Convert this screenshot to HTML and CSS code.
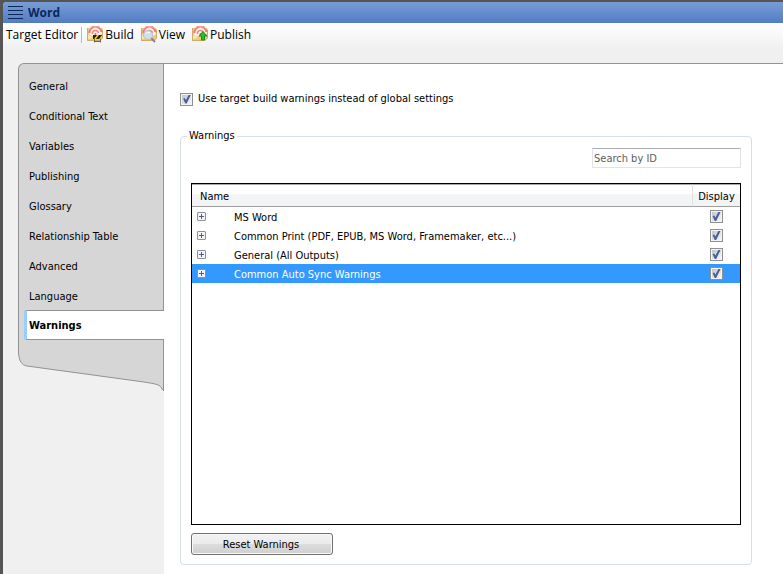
FILE: index.html
```html
<!DOCTYPE html>
<html lang="en">
<head>
<meta charset="utf-8">
<title>Word - Target Editor</title>
<link rel="stylesheet" href="styles.css">
</head>
<body>
<svg class="defs" aria-hidden="true">
  <symbol id="target" viewBox="0 0 16 16">
    <path d="M0 2H15L16 4V12L13 15H0Z" fill="#edca84"/>
    <path d="M.5 2V14.500H13L15.500 12V4" fill="none" stroke="#d4ab62"/>
    <path d="M2 9A6 6 0 0 1 15 8L12 10H4Z" fill="#fff1ec"/>
    <path d="M2.500 7A6 6 0 0 1 14.500 6" fill="none" stroke="#ee7777" stroke-width="2"/>
    <path d="M2 4Q8 -3 14 3" fill="none" stroke="#f5a3a0"/>
    <path d="M5.500 8A3 3 0 0 1 11.500 7" fill="none" stroke="#ee8885" stroke-width="1.500"/>
    <circle cx="8.500" cy="8" r="1" fill="#e36464"/>
    <path d="M1 9L6 11L3 13H1Z" fill="#fae5ad"/>
  </symbol>
</svg>
<div class="window">
  <header class="titlebar">
    <svg class="grip" viewBox="0 0 15 13" aria-hidden="true"><path d="M0 .5H15M0 4.5H15M0 8.5H15M0 12.5H15" stroke="#0b2859"/></svg>
    <h1>Word</h1>
  </header>
  <div class="toolbar">
    <span class="caption">Target Editor</span>
    <button type="button" class="tool">
      <svg viewBox="0 0 16 17" aria-hidden="true"><use href="#target" width="16" height="16"/><path d="M6 9H15V13H6Z" fill="#292514"/><path d="M7 13L10 9H12L9 13ZM12 13L15 9V13Z" fill="#f4c626"/><path d="M7.500 13V16.500M13.500 13V16.500M7 15.500H14" stroke="#666"/></svg>
      Build</button>
    <button type="button" class="tool">
      <svg viewBox="0 0 16 17" aria-hidden="true"><use href="#target" width="16" height="16"/><path d="M10 12L14 16" stroke="#868686" stroke-width="2"/><circle cx="7" cy="9" r="4.500" fill="#d0dfeb" stroke="#b6bec6"/><path d="M4.500 8Q6 5.500 9 6.500" fill="none" stroke="#fff"/></svg>
      View</button>
    <button type="button" class="tool">
      <svg viewBox="0 0 16 17" aria-hidden="true"><use href="#target" width="16" height="16"/><path d="M11 5.500L15 10H12.500V14H9.500V10H7Z" fill="#20c526" stroke="#188a20"/></svg>
      Publish</button>
  </div>
  <div class="editor">
    <div class="side">
      <nav class="tabs">
        <a href="#general">General</a>
        <a href="#conditional">Conditional Text</a>
        <a href="#variables">Variables</a>
        <a href="#publishing">Publishing</a>
        <a href="#glossary">Glossary</a>
        <a href="#relationship">Relationship Table</a>
        <a href="#advanced">Advanced</a>
        <a href="#language">Language</a>
        <a href="#warnings" class="active" aria-current="page">Warnings</a>
      </nav>
      <svg class="tail" viewBox="0 0 146 51" preserveAspectRatio="none" aria-hidden="true">
        <path d="M.5 0V13C1 20 3 25 9 26L126 42C137 44 143 44 144 50L145.500 50V0Z" fill="#d6d6d6"/>
        <path d="M.5 0V13C1 20 3 25 9 26L126 42C137 44 143 44 144.500 50M145.500 0V51" fill="none" stroke="#929292"/>
      </svg>
    </div>
    <main class="page" id="warnings">
      <label class="option"><input type="checkbox" class="check" checked>Use target build warnings instead of global settings</label>
      <fieldset class="group">
        <legend>Warnings</legend>
        <div class="content">
          <input type="text" class="search" placeholder="Search by ID" aria-label="Search by ID">
          <div class="grid">
            <table>
              <thead><tr><th class="name" colspan="2">Name</th><th class="display">Display</th></tr></thead>
              <tbody>
                <tr><td class="toggle"><button type="button" class="expand" aria-label="Expand MS Word"></button></td><td class="title">MS Word</td><td class="display"><input type="checkbox" class="check" aria-label="Display MS Word" checked></td></tr>
                <tr><td class="toggle"><button type="button" class="expand" aria-label="Expand Common Print"></button></td><td class="title">Common Print (PDF, EPUB, MS Word, Framemaker, etc...)</td><td class="display"><input type="checkbox" class="check" aria-label="Display Common Print" checked></td></tr>
                <tr><td class="toggle"><button type="button" class="expand" aria-label="Expand General"></button></td><td class="title">General (All Outputs)</td><td class="display"><input type="checkbox" class="check" aria-label="Display General" checked></td></tr>
                <tr class="selected"><td class="toggle"><button type="button" class="expand" aria-label="Expand Common Auto Sync Warnings"></button></td><td class="title">Common Auto Sync Warnings</td><td class="display"><input type="checkbox" class="check" aria-label="Display Common Auto Sync Warnings" checked></td></tr>
              </tbody>
            </table>
          </div>
          <button type="button" class="reset">Reset Warnings</button>
        </div>
      </fieldset>
    </main>
  </div>
</div>
</body>
</html>
```
FILE: styles.css
```css
* { box-sizing: border-box; }

body {
  margin: 0;
  background: #f0f0f0;
  color: #000;
  font: 11px/14px "DejaVu Sans Condensed", Tahoma, sans-serif;
}

button, input { font: inherit; color: inherit; }

.defs { position: absolute; width: 0; height: 0; }

.window {
  display: flex;
  flex-direction: column;
  min-height: 100vh;
  border: solid #555;
  border-width: 2px 0 0 3px;
}

.titlebar {
  display: flex;
  align-items: center;
  gap: 5px;
  height: 21px;
  padding-left: 5px;
  border-radius: 4px 0 0 0;
  background: linear-gradient(#789dd6, #527dc3);
  box-shadow: -4px -4px 0 0 #555;
}

.titlebar h1 {
  margin: 0;
  color: #0b2859;
  font: bold 12px/16px "Open Sans", sans-serif;
}

.grip { width: 15px; height: 13px; }

.toolbar {
  display: flex;
  align-items: center;
  height: 25px;
  padding: 0 0 2px 3px;
  background: linear-gradient(#fff, #f0f0f0);
  font: 12px/16px "Open Sans", sans-serif;
}

.caption {
  margin-right: 3px;
  padding-right: 3px;
  border-right: 1px solid #bbb;
}

.tool {
  display: flex;
  align-items: center;
  gap: 2px;
  margin-right: 3px;
  padding: 0 2px;
  border: 0;
  background: none;
}

.tool svg { width: 16px; height: 17px; }

.editor {
  display: flex;
  flex: 1;
  padding: 15px 0 0 15px;
}

.side {
  flex: 0 0 146px;
}

.tabs {
  padding: 7px 0 0 5px;
  border: 1px solid #929292;
  border-bottom: 0;
  border-radius: 6px 0 0 0;
  background: #d6d6d6;
}

.tabs a {
  display: flex;
  align-items: center;
  height: 30px;
  padding: 2px 0 0 5px;
  color: #000;
  text-decoration: none;
}

.tabs .active {
  margin-top: -1px;
  margin-right: -1px;
  padding-left: 2px;
  border: 1px solid #929292;
  border-left: 3px solid #99ccff;
  border-right: 0;
  border-radius: 2px 0 0 2px;
  background: #fff;
  font-weight: bold;
}

.tail { display: block; width: 100%; height: 51px; }

.page {
  display: flex;
  flex: 1;
  flex-direction: column;
  min-width: 0;
  padding: 28px 31px 9px 16px;
  border-top: 1px solid #929292;
  background: #fff;
}

.option {
  display: flex;
  align-items: center;
  align-self: flex-start;
  gap: 5px;
}

.check {
  appearance: none;
  flex: none;
  display: block;
  width: 13px;
  height: 13px;
  margin: 0;
  padding: 1px;
  border: 1px solid #8e8f8f;
  background: linear-gradient(135deg, #bfc5ce, #f6f6f6) content-box, #f4f4f4;
}

.check:checked::after {
  content: "";
  display: block;
  width: 9px;
  height: 9px;
  background: #4a5f97;
  clip-path: polygon(12% 45%, 30% 40%, 44% 62%, 76% 0, 100% 0, 52% 100%, 36% 100%);
}

.group {
  display: flex;
  flex: 1;
  flex-direction: column;
  min-width: 0;
  margin: 23px 0 0;
  padding: 0 10px 9px;
  border: 1px solid #d5dfe5;
  border-radius: 4px;
}

.group legend { margin-left: -4px; padding: 0 2px; }

.content {
  display: flex;
  flex: 1;
  flex-direction: column;
  height: 100%;
}

.search {
  align-self: flex-end;
  width: 149px;
  height: 20px;
  margin: 5px 0 15px;
  padding: 0 1px;
  border: 1px solid #e2e3ea;
  border-top-color: #abadb3;
  border-radius: 1px;
  background: #fff;
}

.search::placeholder { color: #606060; opacity: 1; }

.grid {
  flex: 1;
  border: 1px solid #000;
  background: #fff;
}

table {
  width: 100%;
  table-layout: auto;
  border-collapse: separate;
  border-spacing: 0;
}

th {
  height: 23px;
  padding: 2px 0 0;
  border-top: 1px solid #aaa;
  border-bottom: 1px solid #a0a0a0;
  background: linear-gradient(#fff 45%, #f4f5f7 45%, #f2f3f5);
  font-weight: normal;
  text-align: left;
}

th.name { padding-left: 8px; }

th.display { border-left: 1px solid #dfe0e2; text-align: center; }

td { height: 19px; padding: 0; }

.title { padding-top: 2px; }

.toggle { width: 42px; padding-left: 5px; }

.display { width: 48px; }

td .check { margin: 0 auto; }

.expand {
  display: block;
  width: 9px;
  height: 9px;
  padding: 0;
  border: 1px solid #919191;
  border-radius: 1px;
  background:
    linear-gradient(#4a5f97, #4a5f97) center / 5px 1px no-repeat,
    linear-gradient(#4a5f97, #4a5f97) center / 1px 5px no-repeat,
    #f4f4f4;
}

.selected { background: #3399ff; color: #fff; }

.reset {
  width: 142px;
  height: 22px;
  margin-top: 8px;
  padding: 2px 2px 0 0;
  border: 1px solid #707070;
  border-radius: 3px;
  background: linear-gradient(#f2f2f2, #ebebeb 50%, #dddddd 50%, #cfcfcf);
  box-shadow: inset 0 0 0 1px #fafafa;
}
```
